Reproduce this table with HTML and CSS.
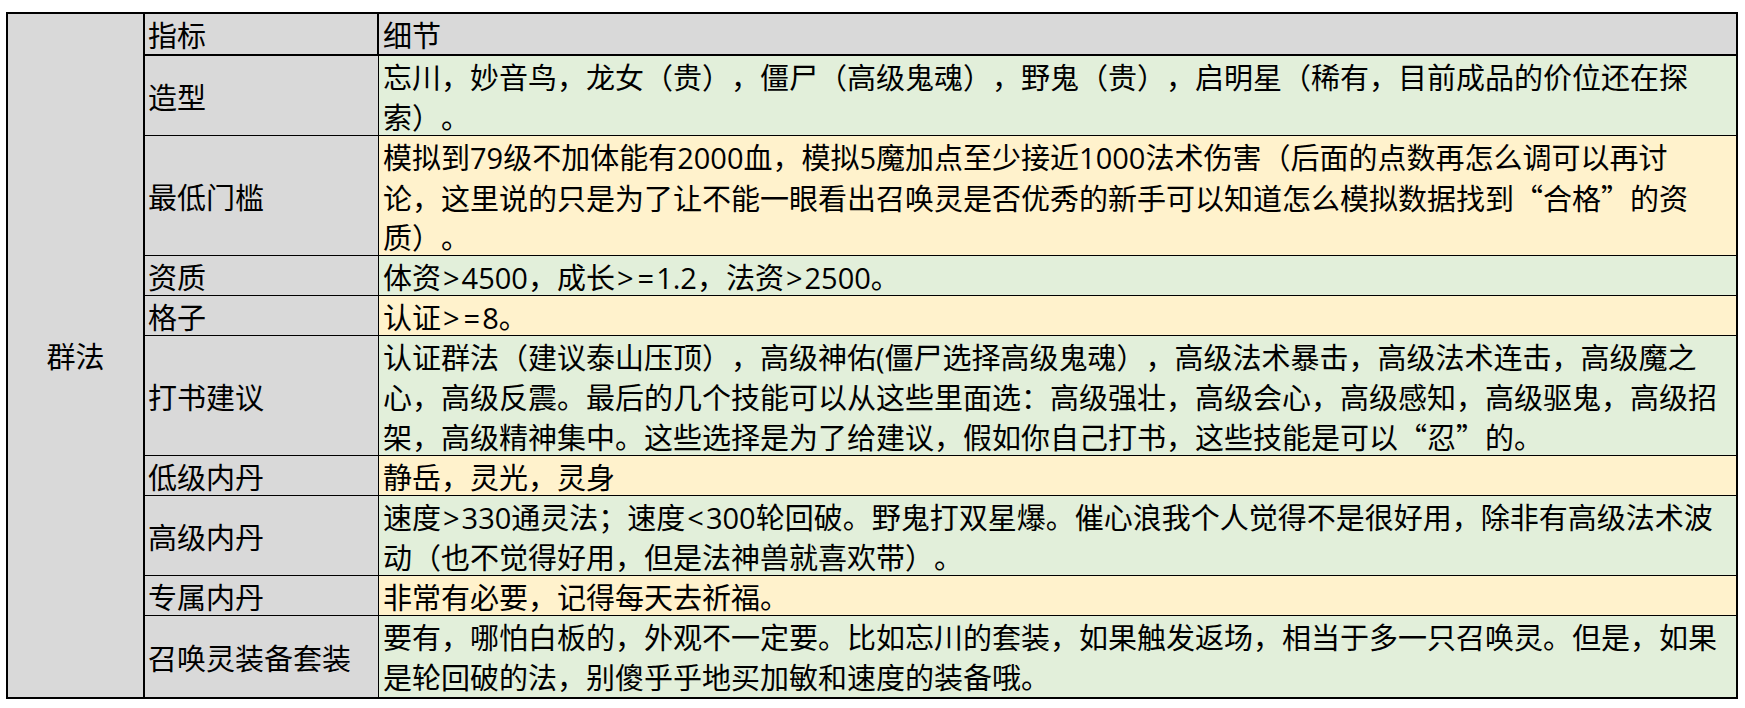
FILE: index.html
```html
<!DOCTYPE html>
<html lang="zh-CN">
<head>
<meta charset="utf-8">
<title>群法</title>
<link rel="stylesheet" href="styles.css">
</head>
<body>
<div class="sheet">
  <div class="group">群法</div>

  <div class="label head">指标</div>
  <div class="detail head">细节</div>

  <div class="label">造型</div>
  <div class="detail green">忘川，妙音鸟，龙女（贵），僵尸（高级鬼魂），野鬼（贵），启明星（稀有，目前成品的价位还在探<br>索）。</div>

  <div class="label">最低门槛</div>
  <div class="detail yellow">模拟到79级不加体能有2000血，模拟5魔加点至少接近1000法术伤害（后面的点数再怎么调可以再讨<br>论，这里说的只是为了让不能一眼看出召唤灵是否优秀的新手可以知道怎么模拟数据找到<span class="cjk">“</span>合格<span class="cjk">”</span>的资<br>质）。</div>

  <div class="label">资质</div>
  <div class="detail green">体资<span class="op">&gt;</span>4500，成长<span class="op">&gt;</span><span class="op">=</span>1.2，法资<span class="op">&gt;</span>2500。</div>

  <div class="label">格子</div>
  <div class="detail yellow">认证<span class="op">&gt;</span><span class="op">=</span>8。</div>

  <div class="label">打书建议</div>
  <div class="detail green">认证群法（建议泰山压顶），高级神佑(僵尸选择高级鬼魂），高级法术暴击，高级法术连击，高级魔之<br>心，高级反震。最后的几个技能可以从这些里面选：高级强壮，高级会心，高级感知，高级驱鬼，高级招<br>架，高级精神集中。这些选择是为了给建议，假如你自己打书，这些技能是可以<span class="cjk">“</span>忍<span class="cjk">”</span>的。</div>

  <div class="label">低级内丹</div>
  <div class="detail yellow">静岳，灵光，灵身</div>

  <div class="label">高级内丹</div>
  <div class="detail green">速度<span class="op">&gt;</span>330通灵法；速度<span class="op">&lt;</span>300轮回破。野鬼打双星爆。催心浪我个人觉得不是很好用，除非有高级法术波<br>动（也不觉得好用，但是法神兽就喜欢带）。</div>

  <div class="label">专属内丹</div>
  <div class="detail yellow">非常有必要，记得每天去祈福。</div>

  <div class="label last">召唤灵装备套装</div>
  <div class="detail green last">要有，哪怕白板的，外观不一定要。比如忘川的套装，如果触发返场，相当于多一只召唤灵。但是，如果<br>是轮回破的法，别傻乎乎地买加敏和速度的装备哦。</div>
</div>
</body>
</html>
```
FILE: styles.css
```css
* {
  box-sizing: border-box;
}

html, body {
  margin: 0;
  padding: 0;
  background: #ffffff;
}

body {
  padding: 12px 0 0 6px;
  font-family: "Open Sans", "Noto Sans CJK SC", sans-serif;
  font-size: 29px;
  line-height: 39.5px;
  color: #000000;
  text-spacing-trim: space-all;
}

.sheet {
  width: 1732px;
  display: grid;
  grid-template-columns: 137px 234px 1fr;
  grid-template-rows: 42px 80px 120px 40px 40px 120px 40px 80px 40px 81px;
  border: 2px solid #000000;
  background: #d9d9d9;
}

.cjk {
  font-family: "Noto Sans CJK SC", sans-serif;
}

.op {
  padding: 0 2px;
}

.group {
  grid-column: 1;
  grid-row: 1 / -1;
  display: flex;
  align-items: center;
  justify-content: center;
  border-right: 2px solid #000000;
  background: #d9d9d9;
  padding-top: 2px;
}

.label {
  grid-column: 2;
  display: flex;
  align-items: center;
  padding-top: 4px;
  padding-left: 3px;
  border-right: 1px solid #000000;
  border-bottom: 1px solid #000000;
  background: #d9d9d9;
}

.detail {
  grid-column: 3;
  padding: 2px 2px 0 4px;
  border-bottom: 1px solid #000000;
  overflow: hidden;
}

.head {
  border-bottom-width: 2px;
  background: #d9d9d9;
}

.label.head {
  border-right-width: 2px;
}

.last {
  border-bottom: none;
}

.green {
  background: #e2efda;
}

.yellow {
  background: #fff2cc;
}
```
